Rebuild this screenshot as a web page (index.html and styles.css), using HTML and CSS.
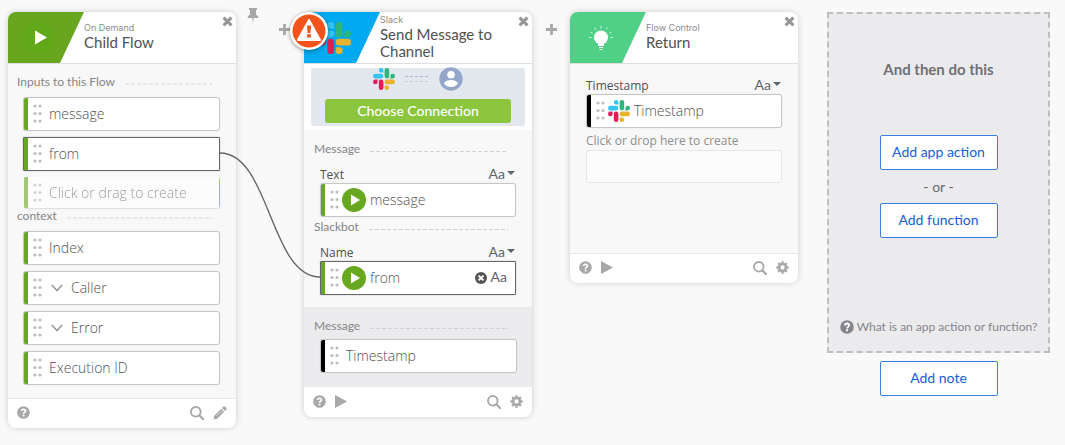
FILE: index.html
```
<!DOCTYPE html>
<html lang="en">
<head>
<meta charset="utf-8">
<title>Child Flow</title>
<link rel="stylesheet" href="styles.css">
</head>
<body>
<svg class="defs" aria-hidden="true">
  <symbol id="slack" viewBox="0 0 24 24">
    <path fill="#e01e5a" d="M5.042 15.165a2.528 2.528 0 0 1-2.52 2.523A2.528 2.528 0 0 1 0 15.165a2.527 2.527 0 0 1 2.522-2.52h2.52v2.52zM6.313 15.165a2.527 2.527 0 0 1 2.521-2.52 2.527 2.527 0 0 1 2.521 2.52v6.313A2.528 2.528 0 0 1 8.834 24a2.528 2.528 0 0 1-2.521-2.522v-6.313z"/>
    <path fill="#36c5f0" d="M8.834 5.042a2.528 2.528 0 0 1-2.521-2.52A2.528 2.528 0 0 1 8.834 0a2.528 2.528 0 0 1 2.521 2.522v2.52H8.834zM8.834 6.313a2.528 2.528 0 0 1 2.521 2.521 2.528 2.528 0 0 1-2.521 2.521H2.522A2.528 2.528 0 0 1 0 8.834a2.528 2.528 0 0 1 2.522-2.521h6.312z"/>
    <path fill="#2eb67d" d="M18.956 8.834a2.528 2.528 0 0 1 2.522-2.521A2.528 2.528 0 0 1 24 8.834a2.528 2.528 0 0 1-2.522 2.521h-2.522V8.834zM17.688 8.834a2.528 2.528 0 0 1-2.523 2.521 2.527 2.527 0 0 1-2.520-2.521V2.522A2.527 2.527 0 0 1 15.165 0a2.528 2.528 0 0 1 2.523 2.522v6.312z"/>
    <path fill="#ecb22e" d="M15.165 18.956a2.528 2.528 0 0 1 2.523 2.522A2.528 2.528 0 0 1 15.165 24a2.527 2.527 0 0 1-2.520-2.522v-2.522h2.520zM15.165 17.688a2.527 2.527 0 0 1-2.520-2.523 2.526 2.526 0 0 1 2.520-2.520h6.313A2.527 2.527 0 0 1 24 15.165a2.528 2.528 0 0 1-2.522 2.523h-6.313z"/>
  </symbol>
  <symbol id="dots" viewBox="0 0 9 19">
    <g fill="#bdbdbd"><circle cx="2" cy="2" r="1.6"/><circle cx="7" cy="2" r="1.6"/><circle cx="2" cy="9.5" r="1.6"/><circle cx="7" cy="9.5" r="1.6"/><circle cx="2" cy="17" r="1.6"/><circle cx="7" cy="17" r="1.6"/></g>
  </symbol>
  <symbol id="run" viewBox="0 0 24 24">
    <circle cx="12" cy="12" r="12" fill="#68a820"/><path fill="#fff" d="M9 6.5 18 12 9 17.5z"/>
  </symbol>
  <symbol id="close" viewBox="0 0 10 10"><path d="M1.400 1.400 8.600 8.600M8.600 1.400 1.400 8.600" stroke="currentColor" stroke-width="2.800"/></symbol>
  <symbol id="plus" viewBox="0 0 11 11"><path d="M5.5 0v11M0 5.5h11" stroke="currentColor" stroke-width="2.800"/></symbol>
  <symbol id="help" viewBox="0 0 14 14">
    <circle cx="7" cy="7" r="6.800" fill="currentColor"/>
    <path d="M4.900 5.400C5 4.100 5.900 3.500 7 3.500c1.200 0 2.100.7 2.100 1.800C9.100 6.700 7.100 6.700 7.100 8.400" fill="none" stroke="#fff" stroke-width="1.800"/>
    <rect x="6.100" y="9.300" width="1.900" height="1.900" fill="#fff"/>
  </symbol>
  <symbol id="play" viewBox="0 0 12 13"><path fill="currentColor" d="M0 0 12 6.500 0 13z"/></symbol>
  <symbol id="search" viewBox="0 0 14 14"><circle cx="5.800" cy="5.800" r="4.800" fill="none" stroke="currentColor" stroke-width="1.900"/><path d="M9.200 9.200 13 13" stroke="currentColor" stroke-width="2.200" stroke-linecap="round"/></symbol>
  <symbol id="pencil" viewBox="0 0 14 14"><path fill="currentColor" d="M.5 13.500 1.200 9.800 8.200 2.800l3 3-7 7zM9 2l1.300-1.300q.9-.8 1.800 0l1.200 1.200q.8.900 0 1.800L12 5z"/><path d="M3.500 9.800 8.600 4.700" stroke="#fff" stroke-width=".6"/></symbol>
  <symbol id="gear" viewBox="0 0 14 14">
    <circle cx="7" cy="7" r="3.700" fill="none" stroke="currentColor" stroke-width="2.800"/>
    <g stroke="currentColor" stroke-width="2.500"><path d="M7 .4v2.400M7 11.200v2.400M.4 7h2.400M11.200 7h2.400M2.330 2.330l1.700 1.700M9.970 9.970l1.700 1.700M2.330 11.670l1.700-1.700M9.970 4.030l1.700-1.700"/></g>
  </symbol>
  <symbol id="chevron" viewBox="0 0 12 8"><path d="M.8 1 6 6.500 11.200 1" fill="none" stroke="#999" stroke-width="1.600"/></symbol>
</svg>

<main class="canvas">
  <article class="card">
    <header class="card-head">
      <div class="flag flag-green">
        <svg width="34" height="34" viewBox="0 0 34 34"><circle cx="17" cy="17" r="16" fill="#62a91a"/><path fill="#fff" d="M13 9.500 25 16.500 13 23.500z"/></svg>
      </div>
      <div class="titles"><p class="app">On Demand</p><h2 class="name">Child Flow</h2></div>
      <button class="icon-btn close" aria-label="Close"><svg width="11" height="11"><use href="#close"/></svg></button>
    </header>
    <section class="body inputs">
      <h3 class="group soft">Inputs to this Flow</h3>
      <ul class="pills">
        <li class="pill"><svg class="dots"><use href="#dots"/></svg>message</li>
        <li class="pill linked"><svg class="dots"><use href="#dots"/></svg>from</li>
        <li class="pill ghost"><svg class="dots"><use href="#dots"/></svg><input class="create" aria-label="New input" placeholder="Click or drag to create"></li>
      </ul>
      <h3 class="group soft">context</h3>
      <ul class="pills">
        <li class="pill"><svg class="dots"><use href="#dots"/></svg>Index</li>
        <li class="pill"><svg class="dots"><use href="#dots"/></svg><button class="icon-btn expand" aria-label="Expand Caller"><svg width="12" height="8"><use href="#chevron"/></svg></button>Caller</li>
        <li class="pill"><svg class="dots"><use href="#dots"/></svg><button class="icon-btn expand" aria-label="Expand Error"><svg width="12" height="8"><use href="#chevron"/></svg></button>Error</li>
        <li class="pill"><svg class="dots"><use href="#dots"/></svg>Execution ID</li>
      </ul>
    </section>
    <footer class="card-foot">
      <button class="icon-btn" aria-label="Help"><svg width="13" height="13"><use href="#help"/></svg></button>
      <span class="grow"></span>
      <button class="icon-btn" aria-label="Search"><svg width="14" height="14"><use href="#search"/></svg></button>
      <button class="icon-btn" aria-label="Edit"><svg width="14" height="14"><use href="#pencil"/></svg></button>
    </footer>
  </article>

  <div class="gutter wide">
    <svg class="wire" viewBox="0 0 100 126" preserveAspectRatio="none"><path d="M0 1C50 1 50 125 100 125" fill="none" stroke="#666" stroke-width="1.400"/></svg>
    <button class="icon-btn pin" aria-label="Pin"><svg width="12" height="16" viewBox="0 0 12 16"><path fill="currentColor" d="M2 0h8v2H9v4.500Q11.500 7.600 11.500 10H6.700L6 15.500 5.300 10H.5Q.5 7.600 3 6.500V2H2z"/></svg></button>
    <button class="icon-btn add" aria-label="Insert step"><svg width="11" height="11"><use href="#plus"/></svg></button>
  </div>

  <article class="card">
    <svg class="alert" role="img" aria-label="Warning" viewBox="0 0 40 40"><circle cx="20" cy="20" r="19" fill="#fff"/><circle cx="20" cy="20" r="16.500" fill="#f2541b"/><path d="M20 9 31 29H9z" fill="#fff" stroke="#fff" stroke-width="2" stroke-linejoin="round"/><path fill="#f2541b" d="M18 14.500h4l-.5 7.500h-3zM18.100 23.300h3.800v3.200h-3.800z"/></svg>
    <header class="card-head">
      <div class="flag flag-blue"><svg width="32" height="32"><use href="#slack"/></svg></div>
      <div class="titles"><p class="app">Slack</p><h2 class="name">Send Message to Channel</h2></div>
      <button class="icon-btn close" aria-label="Close"><svg width="11" height="11"><use href="#close"/></svg></button>
    </header>
    <section class="connection">
      <div class="connection-box">
        <div class="pair">
          <svg width="22" height="22"><use href="#slack"/></svg>
          <svg width="24" height="8" viewBox="0 0 24 8"><path d="M0 1.500h24" stroke="#a9b9d4" stroke-dasharray="3 2"/><path d="M0 6.500h24" stroke="#cbd0d8" stroke-dasharray="3 2"/></svg>
          <svg width="24" height="24" viewBox="0 0 24 24"><circle cx="12" cy="12" r="11.700" fill="#94a6ca"/><circle cx="12" cy="7.800" r="3.800" fill="#fff"/><path fill="#fff" d="M5 16.500q1.500-3.500 7-3.500t7 3.500q-2.500 3.500-7 3.500t-7-3.500z"/></svg>
        </div>
        <button class="choose">Choose Connection</button>
      </div>
    </section>
    <section class="body options">
      <h3 class="group">Message</h3>
      <div class="field-label"><span>Text</span><button class="type">Aa<span class="caret"></span></button></div>
      <div class="pill field"><svg class="dots"><use href="#dots"/></svg><svg class="source" width="24" height="24"><use href="#run"/></svg>message</div>
      <h3 class="group next">Slackbot</h3>
      <div class="field-label"><span>Name</span><button class="type">Aa<span class="caret"></span></button></div>
      <div class="pill field linked"><svg class="dots"><use href="#dots"/></svg><svg class="source" width="24" height="24"><use href="#run"/></svg>from
        <span class="grow"></span>
        <button class="icon-btn" aria-label="Clear Name"><svg width="12" height="12" viewBox="0 0 12 12"><circle cx="6" cy="6" r="6" fill="#555"/><path d="M3.600 3.600 8.400 8.400M8.400 3.600 3.600 8.400" stroke="#fff" stroke-width="1.900"/></svg></button>
        <button class="type">Aa</button>
      </div>
    </section>
    <section class="outputs">
      <h3 class="group">Message</h3>
      <div class="pill out"><svg class="dots"><use href="#dots"/></svg>Timestamp</div>
    </section>
    <footer class="card-foot plain">
      <button class="icon-btn" aria-label="Help"><svg width="13" height="13"><use href="#help"/></svg></button>
      <button class="icon-btn" aria-label="Test"><svg width="12" height="13"><use href="#play"/></svg></button>
      <span class="grow"></span>
      <button class="icon-btn" aria-label="Search"><svg width="14" height="14"><use href="#search"/></svg></button>
      <button class="icon-btn" aria-label="Settings"><svg width="13" height="13"><use href="#gear"/></svg></button>
    </footer>
  </article>

  <div class="gutter">
    <button class="icon-btn add" aria-label="Insert step"><svg width="11" height="11"><use href="#plus"/></svg></button>
  </div>

  <article class="card">
    <header class="card-head">
      <div class="flag flag-mint">
        <svg width="28" height="28" viewBox="0 0 28 28"><circle cx="14" cy="13.500" r="7" fill="#fff"/><path fill="#fff" d="M11 18h6v4h-6z"/><path d="M12 23.500h4M12.500 25.500h3" stroke="#fff" stroke-width="1.200"/><path d="M14 2v2.500M7.700 3.500l1.200 2M20.300 3.500l-1.200 2M3.500 8l2 1.200M24.500 8l-2 1.200M2 13.500h2.500M23.500 13.500H26" stroke="#d5f5e1" stroke-width="1"/></svg>
      </div>
      <div class="titles"><p class="app">Flow Control</p><h2 class="name">Return</h2></div>
      <button class="icon-btn close" aria-label="Close"><svg width="11" height="11"><use href="#close"/></svg></button>
    </header>
    <section class="body returns">
      <div class="field-label"><span>Timestamp</span><button class="type">Aa<span class="caret"></span></button></div>
      <div class="pill field out"><svg class="dots"><use href="#dots"/></svg><svg class="source" width="22" height="22"><use href="#slack"/></svg>Timestamp</div>
      <label class="drop-label" for="drop">Click or drop here to create</label>
      <input class="drop" id="drop">
    </section>
    <footer class="card-foot">
      <button class="icon-btn" aria-label="Help"><svg width="13" height="13"><use href="#help"/></svg></button>
      <button class="icon-btn" aria-label="Test"><svg width="12" height="13"><use href="#play"/></svg></button>
      <span class="grow"></span>
      <button class="icon-btn" aria-label="Search"><svg width="14" height="14"><use href="#search"/></svg></button>
      <button class="icon-btn" aria-label="Settings"><svg width="13" height="13"><use href="#gear"/></svg></button>
    </footer>
  </article>

  <aside class="next-step">
    <div class="chooser">
      <h2 class="then">And then do this</h2>
      <button class="action">Add app action</button>
      <p class="or">- or -</p>
      <button class="action">Add function</button>
      <a class="what" href="#"><svg width="14" height="14"><use href="#help"/></svg>What is an app action or function?</a>
    </div>
    <button class="action">Add note</button>
  </aside>
</main>
</body>
</html>
```
FILE: styles.css
```
* {
  box-sizing: border-box;
}

body {
  margin: 0;
  background: #f9f9f9;
  color: #505050;
  font-family: Lato, "Open Sans", sans-serif;
  font-size: 14px;
}

h2, h3, p, ul {
  margin: 0;
  padding: 0;
  font-weight: 400;
}

ul {
  list-style: none;
}

button, input {
  font: inherit;
  color: inherit;
}

svg {
  display: block;
  flex: none;
}

.defs {
  position: absolute;
  width: 0;
  height: 0;
}

.canvas {
  display: flex;
  align-items: flex-start;
  padding: 12px 15px 16px 8px;
}

.card {
  position: relative;
  flex: 228 1 0;
  min-width: 0;
  border-radius: 8px;
  background: #fff;
  box-shadow: 0 0 6px rgba(0, 0, 0, 0.18);
}

.card-head {
  display: flex;
  height: 52px;
  border-bottom: 1px solid #dedede;
}

.flag {
  display: flex;
  flex: none;
  align-items: center;
  justify-content: center;
  width: 76px;
  padding-right: 15px;
  border-top-left-radius: 8px;
  clip-path: polygon(0 0, 100% 0, 52px 100%, 0 100%);
}

.flag-green {
  background: #68a61f;
}

.flag-blue {
  background: #00a9f0;
}

.flag-mint {
  background: #4fd086;
}

.titles {
  flex: 1;
  align-self: center;
  min-width: 0;
  padding-bottom: 2px;
}

.app {
  color: #8c8c8c;
  font-family: Inter, sans-serif;
  font-size: 9px;
  line-height: 12px;
}

.name {
  font-size: 15px;
  line-height: 17px;
}

.icon-btn {
  display: flex;
  padding: 0;
  border: 0;
  background: none;
  color: #a8a8a8;
}

.close {
  align-self: flex-start;
  margin: 4px 3px 0 0;
  color: #979797;
}

.body {
  background: #f8f8f8;
}

.inputs {
  padding: 10px 16px 13px 15px;
}

.group {
  display: flex;
  align-items: center;
  gap: 10px;
  margin: 0 8px 0 -6px;
  color: #858585;
  font-size: 12px;
  line-height: 16px;
}

.group::after {
  flex: 1;
  height: 1px;
  margin-top: 4px;
  background: repeating-linear-gradient(90deg, #d2d2d2 0 4px, transparent 4px 6px);
  content: "";
}

.soft::after {
  height: 2px;
  background: repeating-linear-gradient(90deg, #e8e8e8 0 4px, transparent 4px 6px);
}

.pills {
  display: grid;
  grid-template-columns: minmax(0, 1fr);
  gap: 6px;
  margin-top: 7px;
}

.pill {
  display: flex;
  align-items: center;
  height: 34px;
  padding: 0 8px 1px 9px;
  border: 1px solid #c6c6c6;
  border-radius: 3px;
  background: linear-gradient(90deg, #68a820 4px, #fff 4px);
  box-shadow: 0 0 1px #c6c6c6;
  font-family: "Open Sans", sans-serif;
  font-size: 14px;
  font-weight: 300;
}

.linked {
  border-color: #666;
  border-radius: 1px;
  box-shadow: 0 0 1px #666;
}

.ghost {
  height: 31px;
  border-color: transparent;
  opacity: 0.6;
  box-shadow: 0 1px 1px #ccc;
}

.out {
  background: linear-gradient(90deg, #000 4px, #fff 4px);
}

.dots {
  width: 9px;
  height: 19px;
  margin-right: 7px;
}

.field .dots {
  margin-right: 3px;
}

.source {
  margin-right: 4px;
}

.create {
  flex: 1;
  min-width: 0;
  padding: 0;
  border: 0;
  background: none;
}

.create::placeholder {
  color: #606060;
  opacity: 1;
}

.expand {
  margin: 0 8px 0 2px;
}

.card-foot {
  display: flex;
  align-items: center;
  gap: 9px;
  height: 30px;
  padding: 0 9px 2px;
  border-top: 1px solid #e8e8e8;
}

.plain {
  border-top-color: #fff;
}

.grow {
  flex: 1;
}

.gutter {
  position: relative;
  display: flex;
  flex: none;
  justify-content: center;
  width: 38px;
  padding-top: 12px;
  color: #aaa;
}

.wide {
  justify-content: space-between;
  width: 68px;
  padding: 0 14px 0 11px;
}

.wide .add {
  margin-top: 12px;
}

.pin {
  align-self: flex-start;
  margin-top: -4px;
}

.wire {
  position: absolute;
  z-index: 2;
  top: 140px;
  left: -16px;
  width: calc(100% + 32px);
  height: 126px;
  pointer-events: none;
}

.alert {
  position: absolute;
  z-index: 3;
  top: -1px;
  left: -15px;
  width: 40px;
  height: 40px;
  filter: drop-shadow(0 1px 2px rgba(0, 0, 0, 0.4));
}

.connection {
  padding: 4px 7px;
}

.connection-box {
  padding: 0 14px 3px;
  border-radius: 2px;
  background: #e3e8ef;
}

.pair {
  display: flex;
  align-items: center;
  justify-content: center;
  gap: 10px;
  height: 22px;
  margin-bottom: 9px;
}

.choose {
  display: block;
  width: 100%;
  height: 24px;
  padding: 0 0 2px;
  border: 0;
  border-radius: 3px;
  background: #8cc63f;
  color: #fff;
  font-size: 14px;
  font-weight: 500;
}

.options {
  padding: 11px 16px 12px;
}

.field-label {
  display: flex;
  align-items: center;
  justify-content: space-between;
  height: 18px;
  margin-top: 8px;
  font-family: "Open Sans", sans-serif;
  font-size: 12px;
}

.type {
  display: flex;
  align-items: center;
  gap: 2px;
  padding: 0 1px 2px 0;
  border: 0;
  background: none;
  color: #5c6670;
  font-family: Lato, sans-serif;
  font-size: 14px;
  font-weight: 400;
}

.pill .type {
  padding: 0 0 2px;
  margin-left: 4px;
}

.caret {
  border: 4px solid transparent;
  border-top: 4px solid #5c6670;
  border-bottom: 0;
}

.next {
  margin-top: 2px;
}

.outputs {
  padding: 11px 15px 14px 16px;
  background: #ebebed;
}

.outputs .pill {
  margin-top: 5px;
}

.returns {
  padding: 4px 16px 70px;
}

.drop-label {
  display: block;
  margin-top: 4px;
  color: #8f8f8f;
  font-family: "Open Sans", sans-serif;
  font-size: 12px;
  line-height: 18px;
}

.drop {
  display: block;
  width: 100%;
  height: 33px;
  border: 1px solid #e6e6e6;
  border-radius: 2px;
  background: #fbfbfb;
}

.next-step {
  display: flex;
  flex: 223 1 0;
  flex-direction: column;
  align-items: center;
  gap: 8px;
  min-width: 0;
  margin-left: 29px;
}

.chooser {
  display: flex;
  flex-direction: column;
  align-items: center;
  width: 100%;
  padding: 45px 0 14px;
  border: 2px dashed #bfbfbf;
  background: #ebebed;
}

.then {
  margin-bottom: 56px;
  color: #707078;
  font-size: 15px;
  font-weight: 700;
  line-height: 20px;
}

.action {
  width: 118px;
  height: 35px;
  padding: 0 0 2px;
  border: 1px solid #3b7de0;
  border-radius: 2px;
  background: #fff;
  color: #1560d8;
  font-size: 14px;
}

.or {
  color: #66666c;
  line-height: 33px;
}

.what {
  display: flex;
  align-items: center;
  gap: 3px;
  margin-top: 79px;
  color: #85858e;
  font-size: 12px;
  line-height: 20px;
  text-decoration: none;
  white-space: nowrap;
}
```
